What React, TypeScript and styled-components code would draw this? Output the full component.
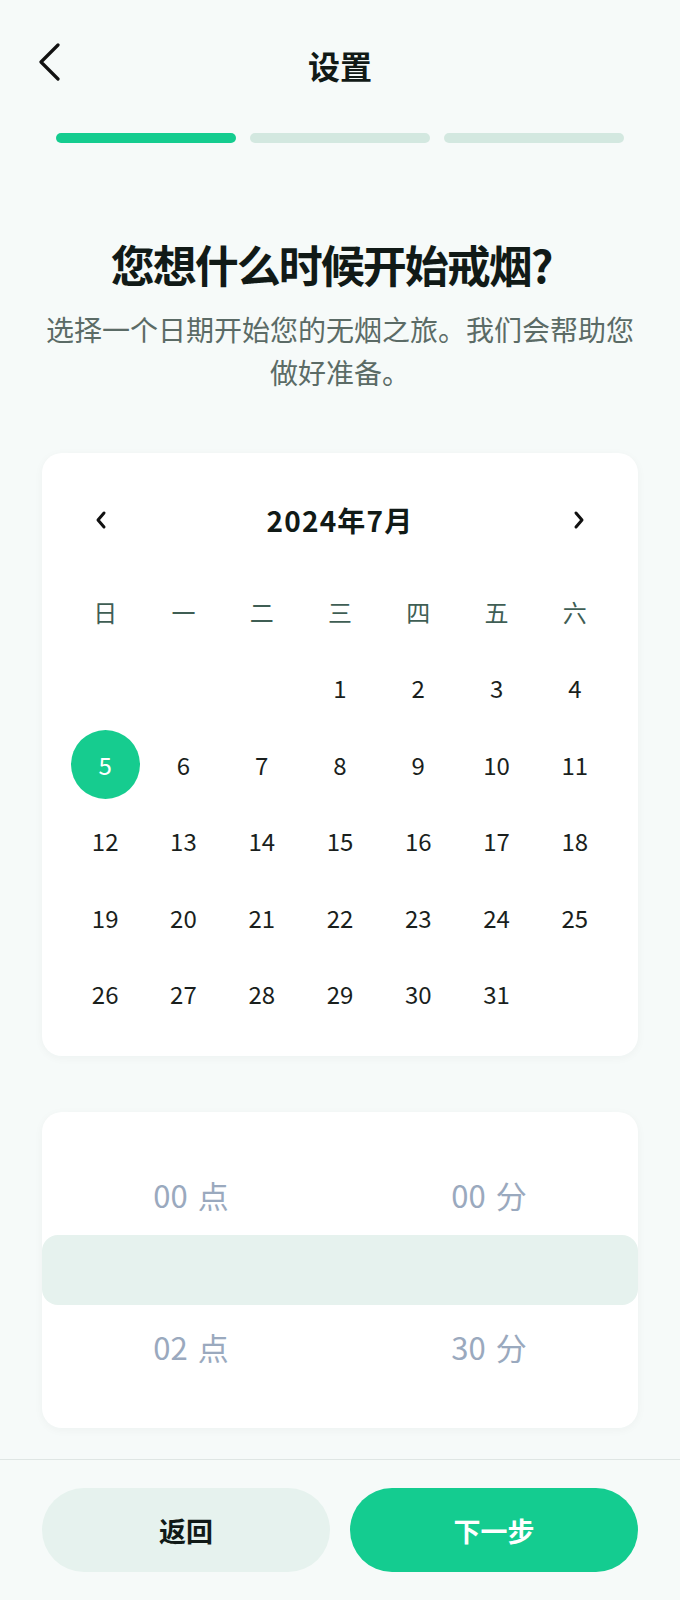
import React from "react";
import styled, { createGlobalStyle } from "styled-components";

const GlobalStyle = createGlobalStyle`
  html, body {
    margin: 0;
    padding: 0;
    background: #f6faf9;
  }
  body {
    font-family: "Noto Sans CJK SC", "Noto Sans", sans-serif;
    color: #111a17;
  }
  * { box-sizing: border-box; }
`;

const Page = styled.div`
  min-height: 100vh;
  display: flex;
  flex-direction: column;
  background: #f6faf9;
`;

const Main = styled.main`
  flex: 1;
  display: flex;
  flex-direction: column;
`;

const Header = styled.header`
  position: relative;
  height: 133px;
  display: flex;
  align-items: flex-start;
  justify-content: center;
  padding-top: 44px;
`;

const BackButton = styled.button`
  position: absolute;
  left: 34px;
  top: 40px;
  width: 30px;
  height: 44px;
  padding: 0;
  border: none;
  background: transparent;
  display: flex;
  align-items: center;
  justify-content: center;
  color: #111;
`;

const Title = styled.h1`
  margin: 0;
  font-size: 32px;
  line-height: 42px;
  font-weight: 700;
  color: #111a17;
`;

const Progress = styled.div`
  display: flex;
  gap: 14px;
  padding: 0 56px;
`;

const Segment = styled.div<{ $active?: boolean }>`
  flex: 1;
  height: 10px;
  border-radius: 5px;
  background: ${(p) => (p.$active ? "#14cc8f" : "#d3e8e0")};
`;

const Headline = styled.h2`
  margin: 91px 0 0;
  padding-right: 18px;
  text-align: center;
  font-size: 44px;
  line-height: 60px;
  font-weight: 700;
  letter-spacing: -2px;
  color: #111a17;
`;

const Subtitle = styled.p`
  margin: 14px 0 0;
  padding: 0 40px;
  text-align: center;
  font-size: 28px;
  line-height: 43px;
  color: #5b6b66;
`;

const Card = styled.section<{ $top: number }>`
  margin: ${(p) => p.$top}px 42px 0;
  background: #ffffff;
  border-radius: 20px;
  box-shadow: 0 2px 10px rgba(20, 60, 45, 0.04);
`;

const CalendarBody = styled.div`
  padding: 24px;
`;

const MonthBar = styled.div`
  height: 86px;
  margin-bottom: 10px;
  display: flex;
  align-items: center;
  justify-content: space-between;
  padding: 0 25px;
`;

const MonthLabel = styled.div`
  font-size: 28px;
  font-weight: 700;
  color: #111a17;
  letter-spacing: 1.2px;
`;

const NavButton = styled.button`
  width: 20px;
  height: 30px;
  padding: 0;
  border: none;
  background: transparent;
  display: flex;
  align-items: center;
  justify-content: center;
  color: #111;
`;

const Grid = styled.div`
  display: grid;
  grid-template-columns: repeat(7, 1fr);
  grid-auto-rows: 76.5px;
`;

const Weekday = styled.div`
  display: flex;
  align-items: center;
  justify-content: center;
  font-size: 24px;
  color: #3f5e54;
`;

const Day = styled.div`
  display: flex;
  align-items: center;
  justify-content: center;
`;

const DayNum = styled.span<{ $selected?: boolean }>`
  width: 69px;
  height: 69px;
  border-radius: 50%;
  display: flex;
  align-items: center;
  justify-content: center;
  font-size: 24px;
  color: ${(p) => (p.$selected ? "#ffffff" : "#1a1f1d")};
  background: ${(p) => (p.$selected ? "#16cc8f" : "transparent")};
`;

const PickerBody = styled.div`
  padding: 44px 0;
`;

const PickerRow = styled.div<{ $selected?: boolean }>`
  display: grid;
  grid-template-columns: 1fr 1fr;
  height: ${(p) => (p.$selected ? "70px" : "76px")};
  margin: ${(p) => (p.$selected ? "3px 0" : "0")};
  border-radius: ${(p) => (p.$selected ? "16px" : "0")};
  background: ${(p) => (p.$selected ? "#e6f2ee" : "transparent")};
`;

const PickerCell = styled.div`
  display: flex;
  align-items: center;
  justify-content: center;
  font-size: 31px;
  color: #9aa9be;
  word-spacing: 3px;
`;

const Footer = styled.footer`
  border-top: 1px solid #dfe6e4;
  padding: 28px 42px 28px;
  display: flex;
  gap: 20px;
  margin-top: 30px;
`;

const ActionButton = styled.button<{ $primary?: boolean }>`
  flex: 1;
  height: 84px;
  border: none;
  border-radius: 42px;
  font-family: inherit;
  font-size: 27px;
  font-weight: 700;
  color: ${(p) => (p.$primary ? "#ffffff" : "#111a17")};
  background: ${(p) => (p.$primary ? "#14cc90" : "#e6f2ee")};
`;

const weekdays = ["日", "一", "二", "三", "四", "五", "六"];

const ChevronBig = () => (
  <svg width="24" height="38" viewBox="0 0 24 38" fill="none">
    <path d="M21 2 L4 19 L21 36" stroke="currentColor" strokeWidth="3.2" strokeLinecap="round" strokeLinejoin="round" />
  </svg>
);

const ChevronSmall = ({ dir }: { dir: "left" | "right" }) => (
  <svg width="14" height="20" viewBox="0 0 14 20" fill="none">
    <path
      d={dir === "left" ? "M10 3 L4 10 L10 17" : "M4 3 L10 10 L4 17"}
      stroke="currentColor"
      strokeWidth="3"
      strokeLinecap="round"
      strokeLinejoin="round"
    />
  </svg>
);

export default function App() {
  const cells: (number | null)[] = [null, null, null];
  for (let d = 1; d <= 31; d++) cells.push(d);

  return (
    <Page>
      <GlobalStyle />
      <Main>
        <Header>
          <BackButton aria-label="返回">
            <ChevronBig />
          </BackButton>
          <Title>设置</Title>
        </Header>
        <Progress>
          <Segment $active />
          <Segment />
          <Segment />
        </Progress>
        <Headline>您想什么时候开始戒烟?</Headline>
        <Subtitle>选择一个日期开始您的无烟之旅。我们会帮助您做好准备。</Subtitle>

        <Card $top={59}>
          <CalendarBody>
            <MonthBar>
              <NavButton aria-label="上个月">
                <ChevronSmall dir="left" />
              </NavButton>
              <MonthLabel>2024年7月</MonthLabel>
              <NavButton aria-label="下个月">
                <ChevronSmall dir="right" />
              </NavButton>
            </MonthBar>
            <Grid>
              {weekdays.map((w) => (
                <Weekday key={w}>{w}</Weekday>
              ))}
              {cells.map((d, i) => (
                <Day key={i}>
                  {d !== null && <DayNum $selected={d === 5}>{d}</DayNum>}
                </Day>
              ))}
            </Grid>
          </CalendarBody>
        </Card>

        <Card $top={56}>
          <PickerBody>
            <PickerRow>
              <PickerCell>00 点</PickerCell>
              <PickerCell>00 分</PickerCell>
            </PickerRow>
            <PickerRow $selected />
            <PickerRow>
              <PickerCell>02 点</PickerCell>
              <PickerCell>30 分</PickerCell>
            </PickerRow>
          </PickerBody>
        </Card>
      </Main>
      <Footer>
        <ActionButton>返回</ActionButton>
        <ActionButton $primary>下一步</ActionButton>
      </Footer>
    </Page>
  );
}
